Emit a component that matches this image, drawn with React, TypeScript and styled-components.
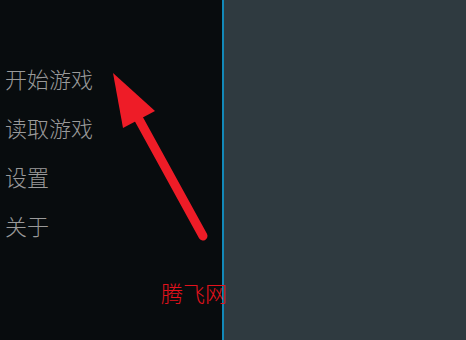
import React from 'react';
import styled, {createGlobalStyle} from "styled-components";

const GlobalStyle = createGlobalStyle`
  html, body {
    margin: 0;
    padding: 0;
    background: #2f3a40;
  }
`

const menuItems = ['开始游戏', '读取游戏', '设置', '关于']

export default function App() {
    return (
        <Screen>
            <GlobalStyle/>
            <Sidebar>
                <Menu>
                    {menuItems.map(el => <MenuItem key={el}>{el}</MenuItem>)}
                </Menu>
            </Sidebar>
            <Divider/>
            <Content/>
            <Arrow width="466" height="340" viewBox="0 0 466 340">
                <line x1="203" y1="236" x2="136" y2="114" stroke="#ee1c27" strokeWidth="9" strokeLinecap="round"/>
                <polygon points="113,73 123,128 155,111" fill="#ee1c27"/>
            </Arrow>
            <Watermark>腾飞网</Watermark>
        </Screen>
    );
}

const Screen = styled.div`
  position: relative;
  display: flex;
  width: 466px;
  height: 340px;
  overflow: hidden;
  font-family: "Noto Sans CJK SC", "Noto Sans", sans-serif;
`

const Sidebar = styled.div`
  width: 222px;
  height: 100%;
  background: #080c0e;
`

const Menu = styled.div`
  display: flex;
  flex-direction: column;
  gap: 19px;
  padding: 63px 0 0 5px;
`

const MenuItem = styled.div`
  font-size: 22px;
  line-height: 30px;
  font-weight: 300;
  color: #9a9a9a;
`

const Divider = styled.div`
  width: 2px;
  height: 100%;
  background: #1288b8;
`

const Content = styled.div`
  flex: 1;
  height: 100%;
  background: #2f3a40;
`

const Arrow = styled.svg`
  position: absolute;
  left: 0;
  top: 0;
`

const Watermark = styled.div`
  position: absolute;
  left: 161px;
  top: 277px;
  font-size: 22px;
  line-height: 30px;
  font-weight: 300;
  color: #e3121c;
`
